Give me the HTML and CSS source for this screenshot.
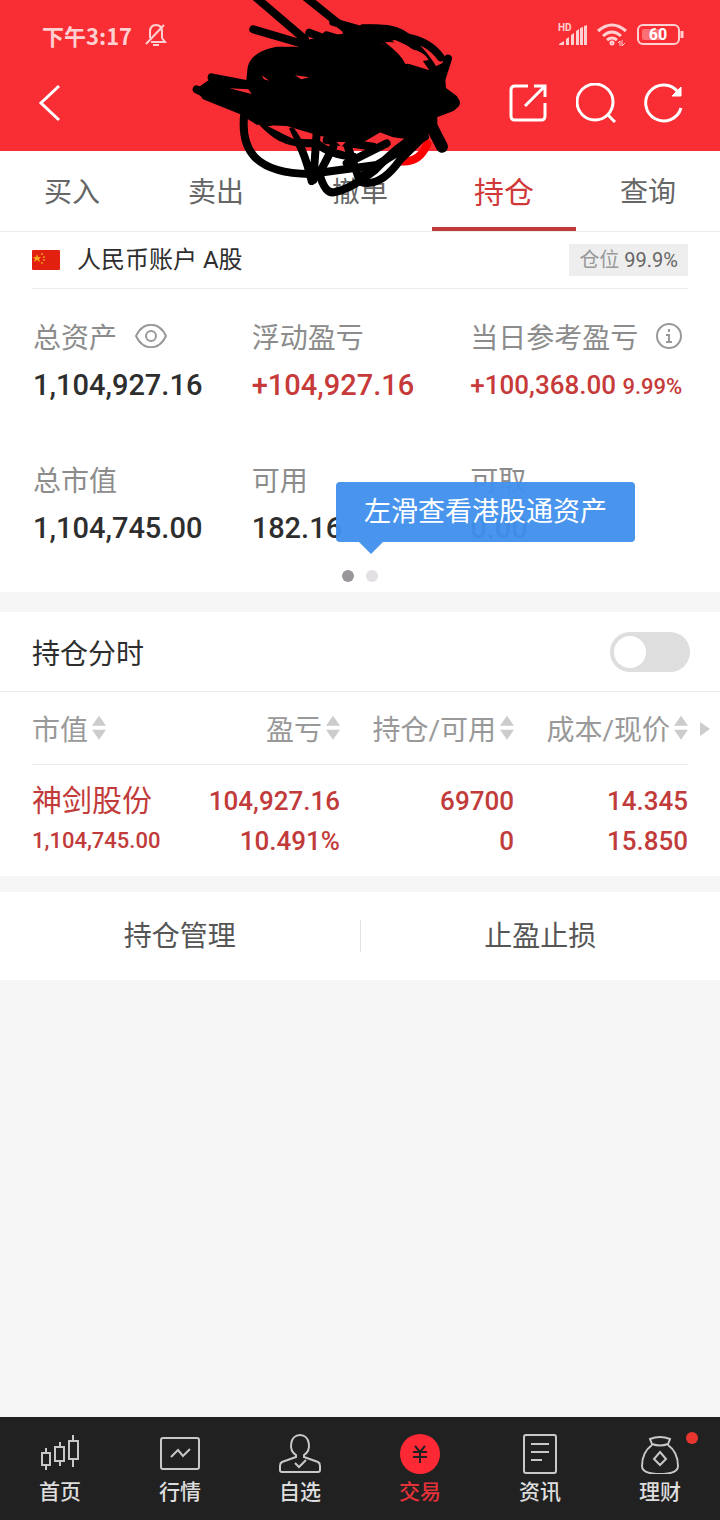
FILE: index.html
```html
<!DOCTYPE html>
<html lang="zh-CN">
<head>
    <meta charset="UTF-8">
    <meta name="viewport" content="width=device-width, initial-scale=1.0">
    <title>持仓</title>
    <link rel="stylesheet" href="styles.css">
</head>
<body>
    <header class="header">
        <div class="status-bar">
            <span class="time">下午3:17</span>
            <svg class="bell" width="24" height="24" viewBox="0 0 24 24" fill="none" stroke="currentColor" stroke-width="2">
                <path d="M6 15V9Q6 2 12 2Q18 2 18 9V15L21 19H7M2 21L20 2"/>
                <path d="M9 22H15"/>
            </svg>
            <div class="status-icons">
                <svg width="30" height="24" viewBox="0 0 30 24" fill="currentColor">
                    <text class="hd" x="0" y="8">HD</text>
                    <path d="M1 21L6 18V22H1ZM8 16L11 14V22H8ZM13 12L16 10V22H13ZM18 8L21 6V22H18ZM22 5L25 4V22H22ZM26 3L29 2V22H26Z"/>
                </svg>
                <svg width="30" height="24" viewBox="0 0 30 24" fill="none" stroke="currentColor" stroke-width="3">
                    <path d="M1 8Q15 -4 29 8M6 13Q15 5 24 13M10 17Q15 13 20 17"/>
                    <circle cx="15" cy="20" r="1"/>
                    <path stroke-width="1" d="M21 20L23 18V23M25 17V23L28 20"/>
                </svg>
                <svg width="48" height="24" viewBox="0 0 48 24" fill="none" stroke="currentColor" stroke-width="2">
                    <rect x="2" y="2" width="41" height="19" rx="5"/>
                    <rect class="charge" x="6" y="6" width="20" height="11" rx="2"/>
                    <path stroke-width="3" d="M46 8V15"/>
                    <text class="battery" x="22" y="17" text-anchor="middle">60</text>
                </svg>
            </div>
        </div>
        <div class="toolbar">
            <button class="icon-btn" aria-label="返回">
                <svg width="40" height="40" viewBox="0 0 40 40"><path d="M27 3L9 20L27 37"/></svg>
            </button>
            <div class="actions">
                <button class="icon-btn" aria-label="分享">
                    <svg width="40" height="40" viewBox="0 0 40 40"><path d="M20 3H7Q3 3 3 7V33Q3 37 7 37H33Q37 37 37 33V20M17 23L36 4M26 3H37V14"/></svg>
                </button>
                <button class="icon-btn" aria-label="搜索">
                    <svg width="40" height="40" viewBox="0 0 40 40"><circle cx="19" cy="19" r="18"/><path d="M31 31L39 39"/></svg>
                </button>
                <button class="icon-btn" aria-label="刷新">
                    <svg width="40" height="40" viewBox="0 0 40 40"><path d="M37 25A18 18 0 1 1 34 9"/><path class="solid" d="M37 4V13H28Z"/></svg>
                </button>
            </div>
        </div>
        <!-- name covered by hand -->
        <svg class="scribble" viewBox="0 0 900 630" fill="none" aria-hidden="true">
            <path class="red" d="M660 484Q718 490 742 432"/>
            <path class="blob" d="M204 210Q208 158 290 142L370 142L390 120L520 98L545 75Q640 70 690 105L600 130L668 160L680 192L745 212L790 190L796 265L830 290Q842 325 810 335L770 350L770 380L720 420L640 410L600 395L540 430L500 425L420 405L320 376L230 372L180 340L70 296L50 268L90 240L200 250Z"/>
            <path d="M225 -10L375 118M375 -10L500 90M220 88L390 138M388 98L460 125M440 106L520 130"/>
            <path d="M460 66L545 90Q640 75 680 112Q750 125 782 172M500 96Q600 80 670 118Q710 130 755 200M600 110L660 155M804 176L780 250"/>
            <path d="M95 232L220 256M50 268L130 308L215 330"/>
            <path d="M193 340C180 450 225 520 390 522L590 495L735 410"/>
            <path d="M250 370C280 400 310 430 395 430M335 395Q370 440 395 543M410 400L400 540M460 440L418 520Q435 585 465 576Q510 568 585 510Q650 440 720 400"/>
            <path d="M410 430Q450 465 520 470M500 430L540 545Q600 565 660 480L725 415M540 530Q600 500 650 450M500 490L620 430M440 420L580 440"/>
            <path stroke-width="36" d="M740 350L786 440M760 308L822 308"/>
            <path class="gap" d="M615 127Q650 122 690 146Q735 155 746 180L676 192Q665 165 615 127ZM148 265L205 268L215 282ZM345 226L388 232L364 238ZM245 226L268 242L252 238ZM470 426L497 426L484 440ZM262 378L325 380L342 418Z"/>
        </svg>
    </header>

    <nav class="tabs">
        <a href="#">买入</a>
        <a href="#">卖出</a>
        <a href="#">撤单</a>
        <a href="#" class="active">持仓</a>
        <a href="#">查询</a>
    </nav>

    <main>
        <section class="account">
            <svg width="28" height="20" viewBox="0 0 28 20" aria-hidden="true">
                <rect width="28" height="20" rx="1" fill="#e12010"/>
                <path fill="#f8a81c" d="M5 4L6 7H9L7 9L8 12L5 10L2 12L3 9L1 7H4Z"/>
                <path fill="#e8781c" d="M9 3h2v2h-2zM11 6h2v2h-2zM11 9h2v2h-2zM9 12h2v2h-2z"/>
            </svg>
            <h1>人民币账户 A股</h1>
            <span class="badge">仓位 <b>99.9%</b></span>
        </section>

        <section class="assets">
            <dl class="asset-grid">
                <div>
                    <dt>总资产
                        <button class="label-btn" aria-label="显示资产">
                            <svg width="32" height="24" viewBox="0 0 32 24"><path d="M1 12C8 -3 24 -3 31 12C24 27 8 27 1 12Z"/><circle cx="16" cy="12" r="5"/></svg>
                        </button>
                    </dt>
                    <dd>1,104,927.16</dd>
                </div>
                <div>
                    <dt>浮动盈亏</dt>
                    <dd class="up">+104,927.16</dd>
                </div>
                <div>
                    <dt>当日参考盈亏
                        <button class="label-btn" aria-label="说明">
                            <svg width="26" height="26" viewBox="0 0 26 26"><circle cx="13" cy="13" r="12"/><path d="M13 6V9M10 12H13V19M10 19H16"/></svg>
                        </button>
                    </dt>
                    <dd class="up today">+100,368.00 <small>9.99%</small></dd>
                </div>
                <div>
                    <dt>总市值</dt>
                    <dd>1,104,745.00</dd>
                </div>
                <div>
                    <dt>可用</dt>
                    <dd>182.16</dd>
                </div>
                <div>
                    <dt>可取</dt>
                    <dd>0.00</dd>
                </div>
            </dl>
            <div class="dots"><i class="on"></i><i></i></div>
            <div class="tooltip">左滑查看港股通资产</div>
        </section>

        <section class="panel">
            <div class="switch-row">
                <label for="minute-chart">持仓分时</label>
                <input type="checkbox" id="minute-chart" class="switch">
            </div>
            <div class="holdings">
                <table>
                    <thead>
                        <tr>
                            <th><button class="sort">市值</button></th>
                            <th><button class="sort">盈亏</button></th>
                            <th><button class="sort">持仓/可用</button></th>
                            <th><button class="sort">成本/现价</button></th>
                        </tr>
                    </thead>
                    <tbody>
                        <tr>
                            <td><span class="stock">神剑股份</span><span class="value">1,104,745.00</span></td>
                            <td><span>104,927.16</span><span>10.491%</span></td>
                            <td><span>69700</span><span>0</span></td>
                            <td><span>14.345</span><span>15.850</span></td>
                        </tr>
                    </tbody>
                </table>
                <button class="more" aria-label="更多列"></button>
            </div>
        </section>

        <section class="links">
            <a href="#">持仓管理</a>
            <a href="#">止盈止损</a>
        </section>
    </main>

    <nav class="bottom-nav">
        <a href="#">
            <svg width="40" height="40" viewBox="0 0 40 40"><path d="M2 19H10V31H2ZM6 14V19M6 31V36M15 13H24V27H15ZM20 8V13M20 27V32M29 7H38V25H29ZM33 1V7M33 25V33"/></svg>
            首页
        </a>
        <a href="#">
            <svg width="42" height="40" viewBox="0 0 42 40"><rect x="2" y="4" width="38" height="31" rx="2"/><path d="M12 23L19 16L24 22L31 15"/></svg>
            行情
        </a>
        <a href="#">
            <svg width="42" height="40" viewBox="0 0 42 40"><path d="M17 21C9 16 11 1 21 1C31 1 33 16 25 21V23L39 28Q41 29 41 32V36Q41 38 39 38H3Q1 38 1 36V32Q1 29 3 28L17 23Z"/><path d="M16 29L20 33L27 26"/></svg>
            自选
        </a>
        <a href="#" class="active">
            <svg width="40" height="40" viewBox="0 0 40 40"><circle class="coin" cx="20" cy="20" r="20"/><path class="yen" d="M15 12L20 18L25 12M13 18H27M13 23H27M20 18V29"/></svg>
            交易
        </a>
        <a href="#">
            <svg width="40" height="40" viewBox="0 0 40 40"><rect x="4" y="1" width="32" height="38" rx="2"/><path d="M11 10H29M11 18H29M11 26H22"/></svg>
            资讯
        </a>
        <a href="#">
            <svg width="40" height="40" viewBox="0 0 40 40"><path d="M12 10L10 5Q20 1 30 5L28 10Q20 13 12 10ZM12 11C5 16 2 24 2 32C2 38 8 40 20 40C32 40 38 38 38 32C38 24 35 16 28 11M20 18L26 25L20 31L14 25Z"/></svg>
            理财
            <i class="red-dot"></i>
        </a>
    </nav>
</body>
</html>
```
FILE: styles.css
```css
* {
    box-sizing: border-box;
}
body {
    margin: 0;
    min-height: 100vh;
    display: flex;
    flex-direction: column;
    background: #f6f6f6;
    color: #2e2e2e;
    font-family: Roboto, "Noto Sans CJK SC", sans-serif;
    font-size: 28px;
}
a {
    color: inherit;
    text-decoration: none;
}
button {
    padding: 0;
    border: none;
    background: none;
    color: inherit;
    font: inherit;
    cursor: pointer;
}
svg {
    display: block;
    flex: none;
}

/* header */
.header {
    position: relative;
    background: #f92e34;
    color: #fff;
}
.status-bar {
    display: flex;
    align-items: center;
    height: 70px;
    padding: 0 36px 0 42px;
    color: #ffd0d2;
}
.time {
    font-family: "Noto Sans CJK SC", sans-serif;
    font-size: 22px;
    font-weight: 700;
    line-height: 32px;
}
.bell {
    margin-left: 12px;
}
.status-icons {
    display: flex;
    gap: 9px;
    margin-left: auto;
}
.hd, .battery {
    fill: currentColor;
    stroke: none;
    font-size: 10px;
    font-weight: 700;
}
.battery {
    fill: #fff;
    font-size: 16px;
}
.charge {
    fill: #fb7075;
    stroke: none;
}
.toolbar {
    display: flex;
    justify-content: space-between;
    height: 81px;
    padding: 13px 36px 0 32px;
}
.icon-btn {
    height: 40px;
}
.icon-btn svg {
    fill: none;
    stroke: #fff;
    stroke-width: 3;
}
.icon-btn .solid {
    fill: #fff;
    stroke-width: 1;
}
.actions {
    display: flex;
    gap: 28px;
}
.scribble {
    position: absolute;
    top: 0;
    left: 25%;
    width: 300px;
    height: 210px;
    stroke: #000;
    stroke-width: 24;
    stroke-linecap: round;
    stroke-linejoin: round;
    pointer-events: none;
}
.scribble .red {
    stroke: #f00;
}
.scribble .blob {
    fill: #000;
    stroke-width: 4;
}
.scribble .gap {
    fill: #f92e34;
    stroke: none;
}

/* top tabs */
.tabs {
    display: flex;
    height: 81px;
    background: #fff;
    border-bottom: 1px solid #ececec;
    color: #666;
}
.tabs a {
    flex: 1;
    line-height: 84px;
    text-align: center;
}
.tabs .active {
    border-bottom: 4px solid #c23b3b;
    color: #d0383a;
    font-size: 30px;
}

/* account */
.account {
    display: flex;
    align-items: center;
    height: 56px;
    padding: 0 32px;
    background: #fff;
}
.account h1 {
    margin: 0 auto 0 17px;
    font-size: 24px;
    font-weight: 400;
    line-height: 32px;
}
.badge {
    padding: 0 10px;
    background: #eee;
    color: #999;
    font-size: 20px;
    line-height: 32px;
}
.badge b {
    color: #666;
    font-weight: 400;
}
.assets {
    position: relative;
    padding-bottom: 10px;
    background: #fff;
}
.asset-grid {
    display: grid;
    grid-template-columns: repeat(3, 1fr);
    row-gap: 43px;
    margin: 0 32px;
    padding-top: 23px;
    border-top: 1px solid #ececec;
}
.asset-grid > div {
    padding-left: 1px;
}
.asset-grid dt {
    display: flex;
    align-items: center;
    gap: 18px;
    height: 48px;
    color: #8c8c8c;
    white-space: nowrap;
}
.asset-grid dd {
    margin: 0;
    font-size: 29px;
    font-weight: 500;
    line-height: 50px;
    white-space: nowrap;
}
.asset-grid .up {
    color: #c73a3a;
}
.asset-grid .today {
    font-size: 26px;
}
.today small {
    font-size: 22px;
}
.label-btn svg {
    fill: none;
    stroke: #999;
    stroke-width: 2;
}
.dots {
    display: flex;
    justify-content: center;
    gap: 12px;
    margin-top: 17px;
}
.dots i {
    width: 12px;
    height: 12px;
    border-radius: 50%;
    background: #e2e0e2;
}
.dots .on {
    background: #999799;
}
.tooltip {
    position: absolute;
    top: 194px;
    left: 336px;
    padding: 0 28px;
    border-radius: 4px;
    background: rgba(66, 145, 237, 0.96);
    color: #fff;
    font-size: 27px;
    line-height: 60px;
}
.tooltip::after {
    content: "";
    position: absolute;
    top: 100%;
    left: 23px;
    border: 12px solid transparent;
    border-top-color: #4a95ee;
    border-bottom: none;
}

/* holdings */
.panel {
    margin-top: 20px;
    background: #fff;
}
.switch-row {
    display: flex;
    align-items: center;
    justify-content: space-between;
    height: 80px;
    padding: 0 30px 0 32px;
    border-bottom: 1px solid #ececec;
}
.switch {
    appearance: none;
    width: 80px;
    height: 40px;
    margin: 0;
    padding: 4px;
    border-radius: 20px;
    background: #dedede;
}
.switch::before {
    content: "";
    display: block;
    width: 32px;
    height: 32px;
    border-radius: 50%;
    background: #fff;
}
.switch:checked {
    background: #d0383a;
}
.switch:checked::before {
    margin-left: auto;
}
.holdings {
    position: relative;
    padding: 0 32px;
}
table {
    width: 100%;
    table-layout: fixed;
    border-collapse: collapse;
}
th {
    width: 174px;
    height: 72px;
    padding: 0;
    border-bottom: 1px solid #ececec;
    color: #999;
    font-weight: 400;
    text-align: right;
    white-space: nowrap;
}
th:first-child {
    width: auto;
}
td {
    padding: 16px 0 15px;
    color: #c23b3b;
    font-size: 26px;
    font-weight: 500;
    line-height: 40px;
    text-align: right;
}
th:first-child, td:first-child {
    text-align: left;
}
td span {
    display: block;
}
td .stock {
    font-size: 30px;
    font-weight: 400;
}
td .value {
    font-size: 22px;
}
.sort::after {
    content: "";
    display: inline-block;
    width: 14px;
    height: 24px;
    margin-left: 4px;
    background: #ccc;
    clip-path: polygon(50% 0, 100% 42%, 0 42%, 0 58%, 100% 58%, 50% 100%, 0 58%, 0 42%);
}
.more {
    position: absolute;
    top: 30px;
    right: 10px;
    border: 7px solid transparent;
    border-left: 10px solid #ccc;
    border-right: none;
}
.links {
    display: flex;
    margin-top: 16px;
    padding: 28px 0;
    background: #fff;
    color: #555;
}
.links a {
    flex: 1;
    height: 32px;
    line-height: 34px;
    text-align: center;
}
.links a + a {
    border-left: 1px solid #e2e2e2;
}

/* bottom navigation */
.bottom-nav {
    display: flex;
    height: 103px;
    margin-top: auto;
    padding-top: 17px;
    background: #212121;
    color: #ddd;
}
.bottom-nav a {
    position: relative;
    flex: 1;
    display: flex;
    flex-direction: column;
    align-items: center;
    gap: 2px;
    font-size: 21px;
    font-weight: 500;
    line-height: 32px;
}
.bottom-nav svg {
    fill: none;
    stroke: #c8c8c8;
    stroke-width: 2;
}
.bottom-nav .active {
    color: #e5323a;
}
.bottom-nav .coin {
    fill: #ff2936;
    stroke: none;
}
.bottom-nav .yen {
    stroke: #212121;
}
.red-dot {
    position: absolute;
    top: -2px;
    right: 22px;
    width: 12px;
    height: 12px;
    border-radius: 50%;
    background: #e8352f;
}
```
